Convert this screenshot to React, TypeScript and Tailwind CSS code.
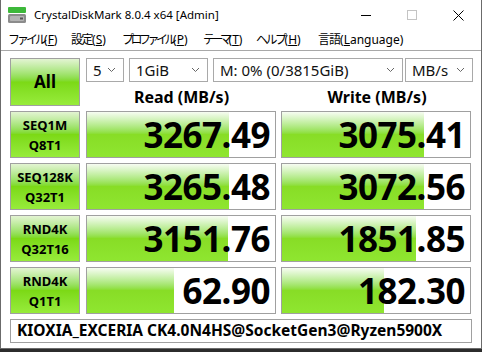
import React from "react";

const rows = [
  { l1: "SEQ1M", l2: "Q8T1", read: "3267.49", write: "3075.41", rw: 142, ww: 142 },
  { l1: "SEQ128K", l2: "Q32T1", read: "3265.48", write: "3072.56", rw: 142, ww: 142 },
  { l1: "RND4K", l2: "Q32T16", read: "3151.76", write: "1851.85", rw: 141, ww: 134 },
  { l1: "RND4K", l2: "Q1T1", read: "62.90", write: "182.30", rw: 87, ww: 102 },
];

// widths taken from where each menu item starts in the window
const menus = [
  { jp: "ファイル", key: "F", post: ")", w: "w-[63px]", t: "tracking-[-3px]" },
  { jp: "設定", key: "S", post: ")", w: "w-[51px]", t: "tracking-[-1.5px]" },
  { jp: "プロファイル", key: "P", post: ")", w: "w-[81px]", t: "tracking-[-3.5px]" },
  { jp: "テーマ", key: "T", post: ")", w: "w-[53px]", t: "tracking-[-3.5px]" },
  { jp: "ヘルプ", key: "H", post: ")", w: "w-[62px]", t: "tracking-[-2.5px]" },
  { jp: "言語", key: "L", post: "anguage)", w: "w-[90px]", t: "tracking-[-1px]" },
];

function Chevron() {
  return (
    <svg width="9" height="6" viewBox="0 0 9 6" className="shrink-0">
      <path d="M1 1l3.5 3.5L8 1" fill="none" stroke="#666" strokeWidth="1" />
    </svg>
  );
}

function Select({ w, text }: { w: string; text: string }) {
  return (
    <div className={`${w} h-[24px] bg-white border border-[#a9a9a9] flex items-center justify-between pl-[6px] pr-[7px] text-[15px] text-[#111]`}>
      <span className="leading-none">{text}</span>
      <Chevron />
    </div>
  );
}

function Bar({ width, value }: { width: number; value: string }) {
  return (
    <div className="relative h-[47px] bg-white border border-[#a0a0a0] overflow-hidden">
      <div
        className="absolute left-0 top-0 bottom-0 bg-gradient-to-b from-[#f7fcf2] via-[#88dd26] to-[#8fe630]"
        style={{ width }}
      />
      <div className="relative h-full flex items-center justify-end pr-[5px] text-[35px] font-bold leading-none text-black tracking-[-0.5px]">
        {value}
      </div>
    </div>
  );
}

export default function App() {
  return (
    <div className="w-[482px] h-[352px] bg-[#2c2c2c] overflow-hidden" style={{ fontFamily: '"Noto Sans", "Noto Sans CJK JP", sans-serif' }}>
      <div className="w-[482px] h-[349px] bg-white border-x border-b border-[#6b6b6b] flex flex-col">
        {/* Title bar */}
        <div className="h-[30px] flex items-center shrink-0">
          <svg width="20" height="18" viewBox="0 0 20 18" className="ml-[6px] mr-[7px]">
            <rect x="1" y="1" width="18" height="6" rx="1" fill="#3db83a" />
            <rect x="1" y="8" width="18" height="9" rx="1.5" fill="#8c8c8c" />
            <rect x="3" y="10" width="14" height="5" rx="1" fill="#b4b4b4" />
            <rect x="13" y="11.5" width="3" height="2" fill="#555" />
          </svg>
          <span className="text-[11.5px] text-black">CrystalDiskMark 8.0.4 x64 [Admin]</span>
          <div className="ml-auto flex items-center h-full">
            <div className="w-[46px] h-full flex items-center justify-center">
              <div className="w-[10px] h-px bg-black" />
            </div>
            <div className="w-[46px] h-full flex items-center justify-center">
              <div className="w-[10px] h-[10px] border border-[#c4c4c4]" />
            </div>
            <div className="w-[46px] h-full flex items-center justify-center">
              <svg width="11" height="11" viewBox="0 0 11 11">
                <path d="M0.5 0.5l10 10M10.5 0.5l-10 10" stroke="#000" strokeWidth="1" />
              </svg>
            </div>
          </div>
        </div>
        {/* Menu bar */}
        <div className="h-[21px] flex items-center pl-[7px] text-[12px] text-black border-b border-[#a8a8a8] shrink-0">
          {menus.map((m) => (
            <span key={m.key} className={`${m.w} whitespace-nowrap`}>
              <span className={m.t}>{m.jp}</span>(
              <span className="underline">{m.key}</span>
              {m.post}
            </span>
          ))}
        </div>
        {/* Main */}
        <div className="pt-[7px] pl-[9px] flex flex-col">
          <div className="flex gap-[6px]">
            <div className="w-[70px] h-[48px] border border-[#a0a0a0] bg-gradient-to-b from-[#e3f4d2] via-[#7cd915] to-[#97ec3a] flex items-center justify-center text-[17px] font-bold text-black">
              All
            </div>
            <div className="flex flex-col">
              <div className="flex">
                <Select w="w-[38px]" text="5" />
                <div className="w-[5px]" />
                <Select w="w-[79px]" text="1GiB" />
                <div className="w-[5px]" />
                <Select w="w-[190px]" text="M: 0% (0/3815GiB)" />
                <div className="w-[2px]" />
                <Select w="w-[68px]" text="MB/s" />
              </div>
              <div className="flex h-[24px] items-center pt-[5px] text-[16px] font-bold text-black">
                <div className="w-[191px] text-center">Read (MB/s)</div>
                <div className="w-[5px]" />
                <div className="w-[190px] text-center">Write (MB/s)</div>
              </div>
            </div>
          </div>
          <div className="mt-[5px] grid grid-cols-[70px_191px_190px] gap-x-[5px] gap-y-[5px]">
            {rows.map((r, i) => (
              <React.Fragment key={i}>
                <div className="w-[70px] h-[47px] border border-[#a0a0a0] bg-gradient-to-b from-[#e3f4d2] via-[#7cd915] to-[#97ec3a] flex flex-col items-center justify-center text-[13px] font-bold text-black leading-[20px]">
                  <span>{r.l1}</span>
                  <span>{r.l2}</span>
                </div>
                <div className="ml-[1px]">
                  <Bar width={r.rw} value={r.read} />
                </div>
                <Bar width={r.ww} value={r.write} />
              </React.Fragment>
            ))}
          </div>
          <div className="mt-[5px] w-[462px] h-[24px] border border-[#a0a0a0] flex items-center pl-[6px] text-[15.5px] font-bold text-black">
            KIOXIA_EXCERIA CK4.0N4HS@SocketGen3@Ryzen5900X
          </div>
        </div>
      </div>
    </div>
  );
}
